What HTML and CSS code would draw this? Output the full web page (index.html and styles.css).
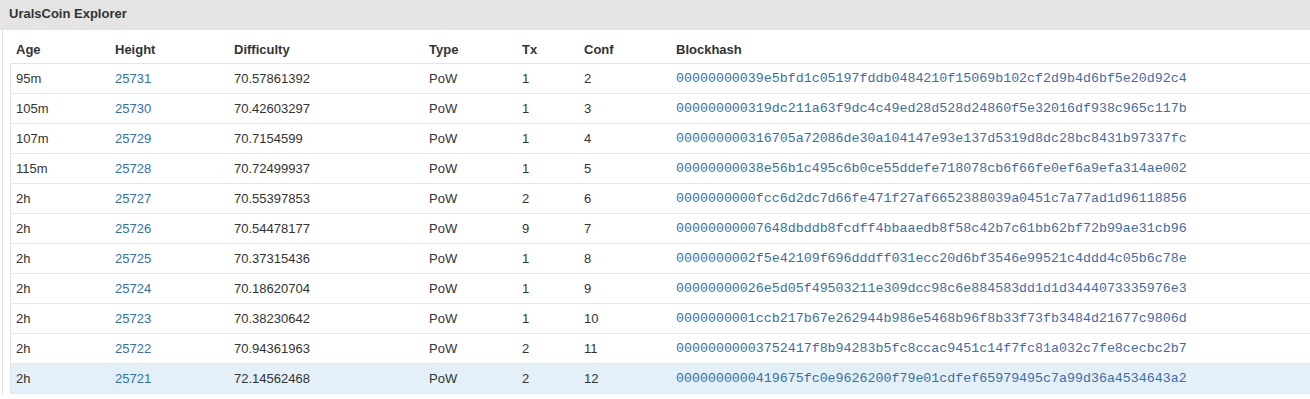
FILE: index.html
```html
<!DOCTYPE html>
<html lang="en">
<head>
    <meta charset="UTF-8" />
    <title>UralsCoin Explorer</title>
    <link rel="stylesheet" href="styles.css">
</head>
<body>
    <div class="panel">
        <div class="panel-heading">UralsCoin Explorer</div>
        <div class="panel-body">
            <table class="block-table">
                <thead>
                    <tr>
                        <th class="col-age">Age</th>
                        <th class="col-height">Height</th>
                        <th class="col-diff">Difficulty</th>
                        <th class="col-type">Type</th>
                        <th class="col-tx">Tx</th>
                        <th class="col-conf">Conf</th>
                        <th>Blockhash</th>
                    </tr>
                </thead>
                <tbody>
                    <tr><td>95m</td><td><a href="#">25731</a></td><td>70.57861392</td><td>PoW</td><td>1</td><td>2</td><td><a class="hash" href="#">00000000039e5bfd1c05197fddb0484210f15069b102cf2d9b4d6bf5e20d92c4</a></td></tr>
                    <tr><td>105m</td><td><a href="#">25730</a></td><td>70.42603297</td><td>PoW</td><td>1</td><td>3</td><td><a class="hash" href="#">000000000319dc211a63f9dc4c49ed28d528d24860f5e32016df938c965c117b</a></td></tr>
                    <tr><td>107m</td><td><a href="#">25729</a></td><td>70.7154599</td><td>PoW</td><td>1</td><td>4</td><td><a class="hash" href="#">000000000316705a72086de30a104147e93e137d5319d8dc28bc8431b97337fc</a></td></tr>
                    <tr><td>115m</td><td><a href="#">25728</a></td><td>70.72499937</td><td>PoW</td><td>1</td><td>5</td><td><a class="hash" href="#">00000000038e56b1c495c6b0ce55ddefe718078cb6f66fe0ef6a9efa314ae002</a></td></tr>
                    <tr><td>2h</td><td><a href="#">25727</a></td><td>70.55397853</td><td>PoW</td><td>2</td><td>6</td><td><a class="hash" href="#">0000000000fcc6d2dc7d66fe471f27af6652388039a0451c7a77ad1d96118856</a></td></tr>
                    <tr><td>2h</td><td><a href="#">25726</a></td><td>70.54478177</td><td>PoW</td><td>9</td><td>7</td><td><a class="hash" href="#">00000000007648dbddb8fcdff4bbaaedb8f58c42b7c61bb62bf72b99ae31cb96</a></td></tr>
                    <tr><td>2h</td><td><a href="#">25725</a></td><td>70.37315436</td><td>PoW</td><td>1</td><td>8</td><td><a class="hash" href="#">0000000002f5e42109f696dddff031ecc20d6bf3546e99521c4ddd4c05b6c78e</a></td></tr>
                    <tr><td>2h</td><td><a href="#">25724</a></td><td>70.18620704</td><td>PoW</td><td>1</td><td>9</td><td><a class="hash" href="#">00000000026e5d05f49503211e309dcc98c6e884583dd1d1d3444073335976e3</a></td></tr>
                    <tr><td>2h</td><td><a href="#">25723</a></td><td>70.38230642</td><td>PoW</td><td>1</td><td>10</td><td><a class="hash" href="#">0000000001ccb217b67e262944b986e5468b96f8b33f73fb3484d21677c9806d</a></td></tr>
                    <tr><td>2h</td><td><a href="#">25722</a></td><td>70.94361963</td><td>PoW</td><td>2</td><td>11</td><td><a class="hash" href="#">00000000003752417f8b94283b5fc8ccac9451c14f7fc81a032c7fe8cecbc2b7</a></td></tr>
                    <tr class="row-active"><td>2h</td><td><a href="#">25721</a></td><td>72.14562468</td><td>PoW</td><td>2</td><td>12</td><td><a class="hash" href="#">0000000000419675fc0e9626200f79e01cdfef65979495c7a99d36a4534643a2</a></td></tr>
                </tbody>
            </table>
        </div>
    </div>
</body>
</html>
```

FILE: styles.css
```css
html, body {
    margin: 0;
    background-color: #fff;
}
body {
    font-family: 'Liberation Sans', Arial, sans-serif;
    font-size: 13px;
    color: #333;
}
a {
    color: #3170b0;
    text-decoration: none;
}
.panel {
    width: 1310px;
}
.panel-heading {
    background-color: #e4e4e4;
    height: 30px;
    line-height: 28px;
    padding: 0 9px;
    font-weight: 700;
    box-sizing: border-box;
}
.panel-body {
    margin-left: 2px;
    border-left: 1px solid #e3e3e3;
    padding: 0 0 0 7px;
}
.block-table {
    width: 100%;
    border-collapse: collapse;
}
.block-table th {
    text-align: left;
    font-weight: 700;
    padding: 11px 5px 4px;
    line-height: 18px;
    height: 18px;
    border-bottom: 1px solid #e5e5e5;
}
.block-table td {
    padding: 5px 5px 5px;
    line-height: 19px;
    height: 19px;
    border-bottom: 1px solid #e8e8e8;
    white-space: nowrap;
}
.block-table tbody tr td:first-child { border-left: 1px solid #e3e3e3; }
.block-table th:first-child { border-left: 1px solid transparent; }
.col-age { width: 89px; }
.col-height { width: 109px; }
.col-diff { width: 185px; }
.col-type { width: 83px; }
.col-tx { width: 52px; }
.col-conf { width: 82px; }
.hash {
    font-family: 'Liberation Mono', 'Courier New', monospace;
    font-size: 13.3px;
    line-height: 19px;
    vertical-align: top;
    color: #3a6ea8;
}
.row-active td { background-color: #e3f0f7; }
```
